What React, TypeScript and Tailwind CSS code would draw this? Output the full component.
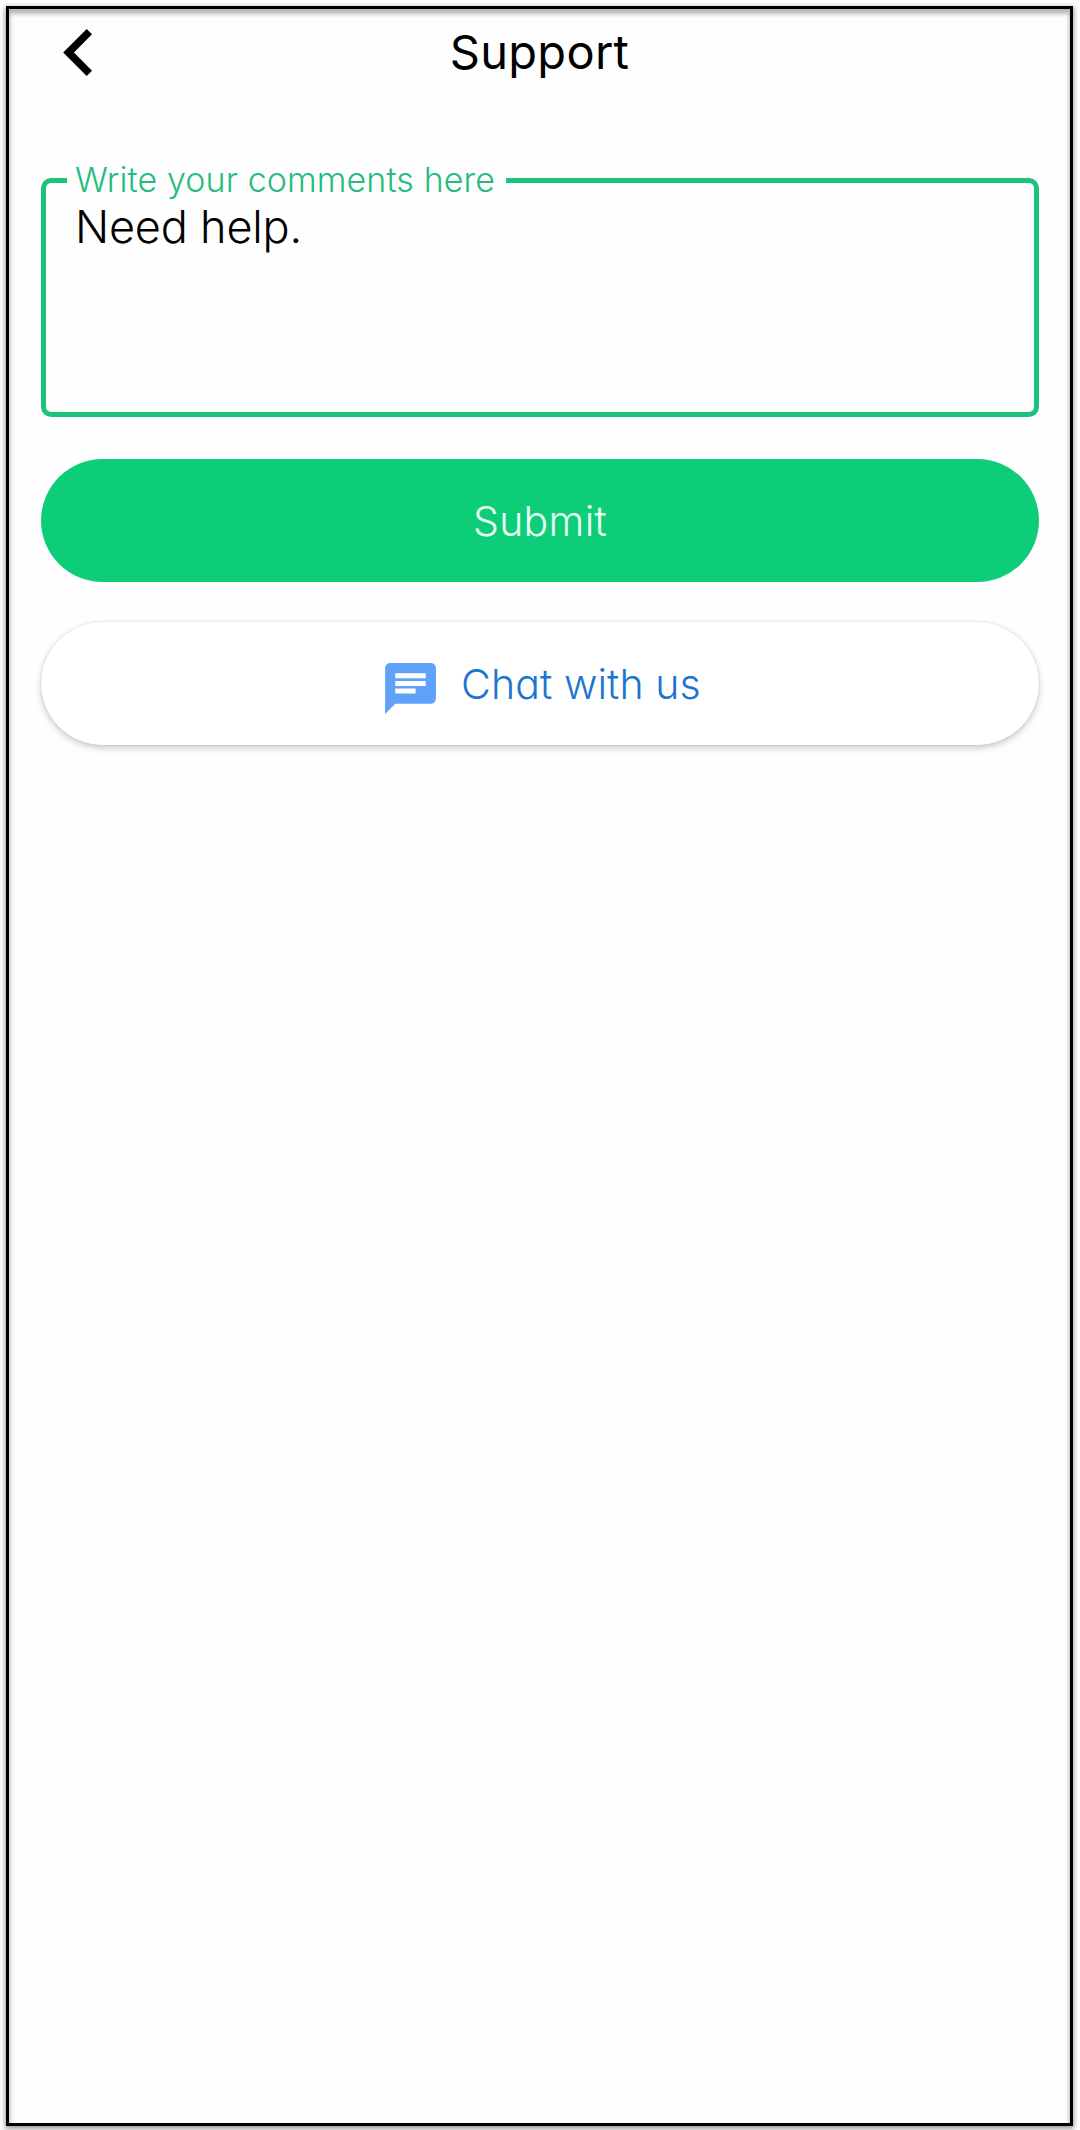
const BackIcon = () => (
  <svg viewBox="0 0 29 47" className="h-[47px] w-[29px]" fill="#000">
    <path d="M23.7 0L29 5.2L11 23.5L29 41.8L23.7 47L0.2 23.5Z" />
  </svg>
);

const ChatIcon = () => (
  <svg viewBox="0 0 24 24" className="h-[61px] w-[61px] shrink-0" fill="#60a2fa">
    <path d="M20 2H4c-1.1 0-1.99.9-1.99 2L2 22l4-4h14c1.1 0 2-.9 2-2V4c0-1.1-.9-2-2-2zM6 9h12v2H6V9zm8 5H6v-2h8v2zm4-6H6V6h12v2z" />
  </svg>
);

export default function App() {
  return (
    <div className="h-[2130px] w-[1080px] overflow-hidden bg-white pt-[6px] pl-[6px] font-['Inter',sans-serif] [font-feature-settings:'cv11']">
      <div className="h-[2120px] w-[1067px] border-[3px] border-black bg-[#fefefe] shadow-[0_2px_5px_1px_rgba(0,0,0,0.4),inset_0_4px_4px_1px_rgba(0,0,0,0.28)]">
        <header className="grid h-[86px] grid-cols-[1fr_auto_1fr] items-center pr-[54px] pl-[54px]">
          <button aria-label="Back" className="justify-self-start">
            <BackIcon />
          </button>
          <h1 className="text-[47px] leading-[56px] font-normal tracking-[0.3px] text-black">Support</h1>
        </header>
        <main className="flex flex-col px-8 pt-[83px]">
          <div className="relative h-[239px] w-[998px] rounded-[10px] border-[5px] border-[#1dc37c] pt-[17px] pl-[29px]">
            <label className="absolute -top-[25px] left-[21px] w-[439px] bg-[#fefefe] pl-[8px] text-[34px] leading-[44px] font-light tracking-[0.1px] whitespace-nowrap text-[#27bb7c]">
              Write your comments here
            </label>
            <p className="text-[45px] leading-[54px] font-light tracking-[-0.2px] text-black">Need help.</p>
          </div>
          <button className="mt-[42px] h-[123px] w-[998px] rounded-full bg-[#0ecd79] pt-[3px] text-[41px] font-light tracking-[0.3px] text-[#e6fff3]">
            Submit
          </button>
          <button className="mt-10 flex h-[123px] w-[998px] items-center rounded-full bg-white pt-[3px] pl-[339px] text-[41px] font-light text-[#1b75d0] shadow-[0_3px_7px_rgba(0,0,0,0.2),0_0_2px_rgba(0,0,0,0.15)]">
            <span className="pt-[7px]">
              <ChatIcon />
            </span>
            <span className="ml-5 tracking-[0.1px] whitespace-nowrap">Chat with us</span>
          </button>
        </main>
      </div>
    </div>
  );
}
